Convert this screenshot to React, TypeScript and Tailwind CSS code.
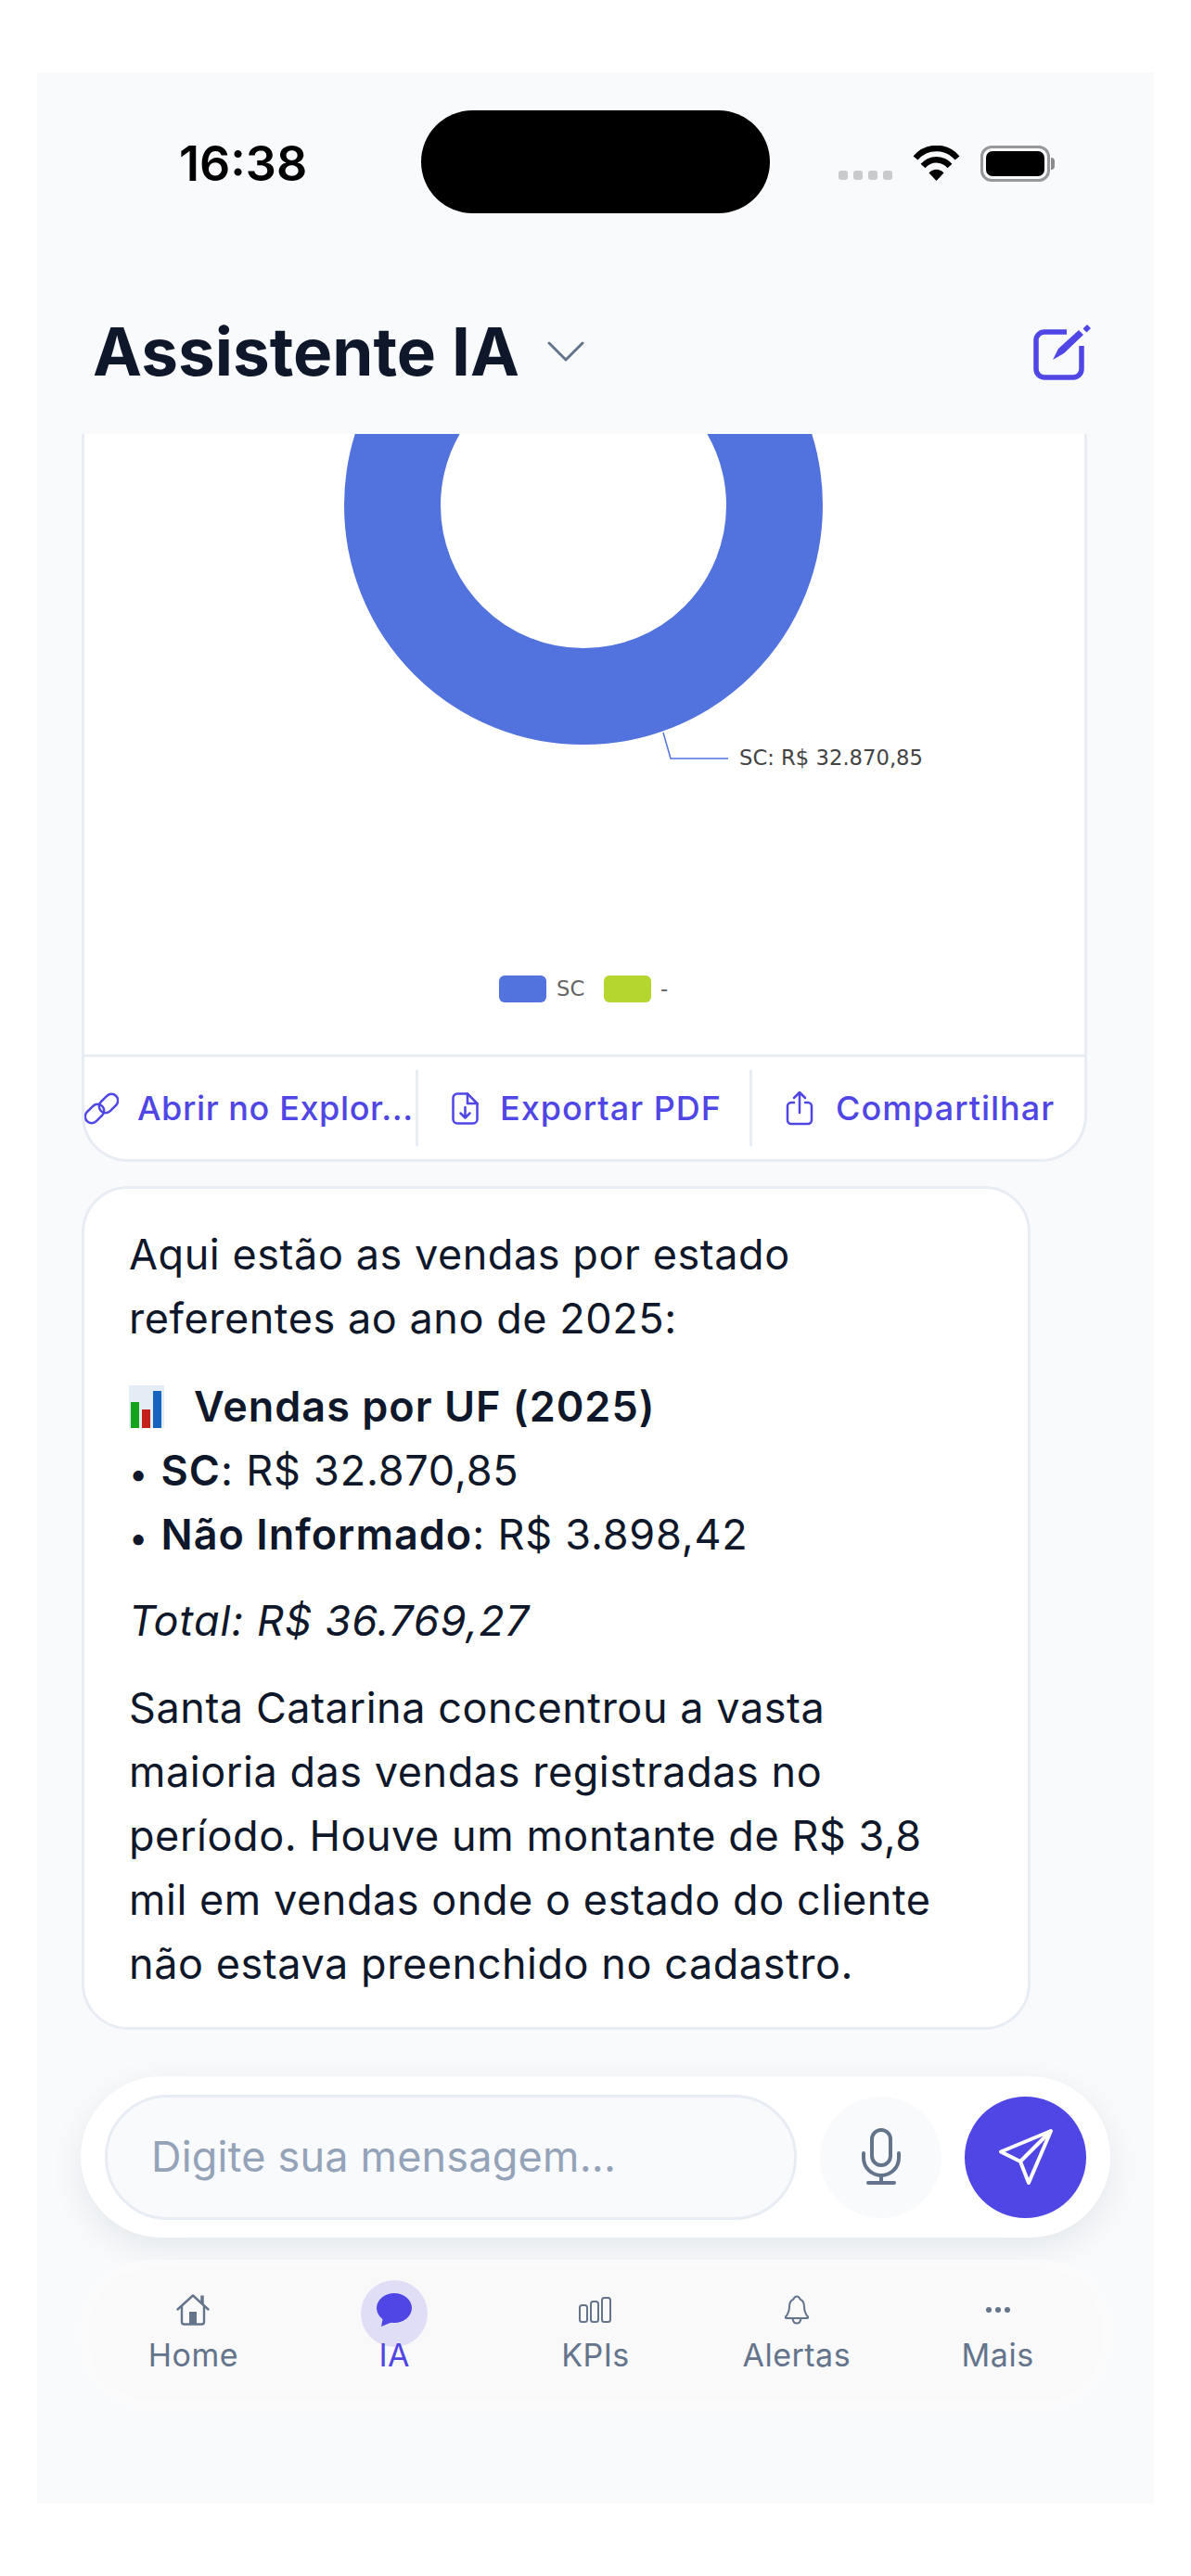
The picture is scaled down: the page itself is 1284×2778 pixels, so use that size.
import React from 'react';

const indigo = '#4f46e5';

const navItems = [
  { label: 'Home', icon: 'home' },
  { label: 'IA', icon: 'chat', active: true },
  { label: 'KPIs', icon: 'kpi' },
  { label: 'Alertas', icon: 'bell' },
  { label: 'Mais', icon: 'more' },
];

const NavIcon = ({ name }: { name: string }) => {
  if (name === 'home') {
    return (
      <svg width="36" height="34" viewBox="0 0 36 34" fill="none" stroke="#64748b" strokeWidth="2.400" strokeLinecap="round" strokeLinejoin="round">
        <path d="M1.500 16.500 18 1.500 34.500 16.500" />
        <path d="M6 13v17a2.500 2.500 0 0 0 2.500 2.500h19a2.500 2.500 0 0 0 2.500-2.500V13" />
        <path d="M28 1.500v9" strokeWidth="3.500" strokeLinecap="butt" />
        <rect x="14" y="19" width="8" height="13" fill="#64748b" stroke="none" />
      </svg>
    );
  }
  if (name === 'chat') {
    return (
      <svg width="40" height="36" viewBox="0 0 40 36" fill={indigo}>
        <ellipse cx="20" cy="16" rx="19" ry="16" />
        <path d="M8 26 L6 36 L18 31 Z" />
      </svg>
    );
  }
  if (name === 'kpi') {
    return (
      <svg width="36" height="28" viewBox="0 0 36 28" fill="none" stroke="#64748b" strokeWidth="2">
        <rect x="1" y="9" width="8" height="18" rx="2.500" />
        <rect x="13" y="5" width="8" height="22" rx="2.500" />
        <rect x="25" y="1" width="9" height="26" rx="2.500" />
      </svg>
    );
  }
  if (name === 'bell') {
    return (
      <svg width="28" height="32" viewBox="0 0 28 32" fill="none" stroke="#64748b" strokeWidth="2" strokeLinejoin="round">
        <path d="M14 1.500c-2 0-3 1.500-3.500 3C7 6 6 9 6 12.500c0 5-1.500 8-4 11-.5 1 0 1.500 1 1.500h22c1 0 1.500-.5 1-1.500-2.500-3-4-6-4-11C22 9 21 6 17.500 4.500 17 3 16 1.500 14 1.500Z" />
        <path d="M9.500 25.500c.5 3 2.300 5 4.500 5s4-2 4.500-5" />
      </svg>
    );
  }
  return (
    <svg width="28" height="8" viewBox="0 0 28 8" fill="#64748b">
      <circle cx="4" cy="4" r="3" />
      <circle cx="14" cy="4" r="3" />
      <circle cx="24" cy="4" r="3" />
    </svg>
  );
};

const ChartEmoji = () => (
  <svg width="38" height="46" viewBox="0 0 38 46" className="shrink-0">
    <rect width="38" height="46" fill="#e4edf5" />
    <rect x="2" y="18" width="9" height="28" fill="#12a51c" />
    <rect x="14" y="26" width="9" height="20" fill="#c4201a" />
    <rect x="26" y="6" width="9" height="40" fill="#1565c0" />
  </svg>
);

export default function App() {
  return (
    <div className="min-h-[2778px] bg-white pt-[78px] px-[40px] font-[Inter,sans-serif]">
      <div className="h-[2622px] bg-[#f8fafc] flex flex-col">
        {/* status bar */}
        <div className="flex pt-[41px]">
          <div className="w-[414px] pl-[153px] pt-[26px] text-[52px] leading-[64px] font-semibold text-black">16:38</div>
          <div className="w-[376px] h-[111px] rounded-[56px] bg-black" />
          <div className="flex pl-[74px] pt-[38px] h-[111px]">
            <div className="flex gap-[6px] pt-[27px]">
              <div className="w-[10px] h-[10px] rounded-[3px] bg-[#c9cacc]" />
              <div className="w-[10px] h-[10px] rounded-[3px] bg-[#c9cacc]" />
              <div className="w-[10px] h-[10px] rounded-[3px] bg-[#c9cacc]" />
              <div className="w-[10px] h-[10px] rounded-[3px] bg-[#c9cacc]" />
            </div>
            <svg className="ml-[22px]" width="51" height="38" viewBox="0 0 51 38" fill="none" stroke="#000" strokeWidth="6.500">
              <path d="M3 13.500C15-.5 36-.5 48 13.500" />
              <path d="M11 22C19 13 32 13 40 22" />
              <path d="M17.500 29.500 25.500 38 33.500 29.500C29 24.500 22 24.500 17.500 29.500Z" fill="#000" stroke="none" />
            </svg>
            <div className="ml-[22px] w-[75px] h-[39px] rounded-[12px] border-[3px] border-[#98989a] p-[3px]">
              <div className="w-full h-full rounded-[7px] bg-black" />
            </div>
            <div className="w-[4px] h-[13px] mt-[13px] ml-[1px] rounded-r-[4px] bg-[#8a8a8c]" />
          </div>
        </div>

        {/* header */}
        <div className="h-[238px] pt-[60px] pl-[60px] pr-[66px] flex items-center justify-between">
          <div className="flex items-center gap-[30px]">
            <h1 className="text-[71px] leading-none font-bold text-[#0f172a]">Assistente IA</h1>
            <svg width="40" height="24" viewBox="0 0 40 24" fill="none" stroke="#64748b" strokeWidth="3" strokeLinecap="round" strokeLinejoin="round">
              <path d="M2 3 20 21 38 3" />
            </svg>
          </div>
          <svg width="64" height="62" viewBox="0 0 64 62" fill="none">
            <path d="M36 10H12a9 9 0 0 0-9 9v31a9 9 0 0 0 9 9h31a9 9 0 0 0 9-9V25" stroke={indigo} strokeWidth="5.500" />
            <path d="M21 40 27 28 49 8 54 13 33 33Z" fill={indigo} />
            <path d="M54.500 6.500 58 3l3 3-3.500 3.500Z" fill={indigo} stroke={indigo} strokeWidth="1.500" strokeLinejoin="round" />
          </svg>
        </div>

        {/* chart card, its top is scrolled away */}
        <div className="ml-[48px] w-[1084px] bg-white border-x-[3px] border-b-[3px] border-[#e8edf4] rounded-b-[50px] overflow-hidden">
          <svg className="block" width="1078" height="669" viewBox="0 0 1078 669">
            <circle cx="538" cy="77" r="206" fill="none" stroke="#5272dd" strokeWidth="104" />
            <path d="M624 322 632 350H694" fill="none" stroke="#5272dd" strokeWidth="1.500" />
            <text x="706" y="357" fontSize="22.700" fill="#444" fontFamily="DejaVu Sans, sans-serif">SC: R$ 32.870,85</text>
            <rect x="447" y="584" width="51" height="29" rx="6" fill="#5272dd" />
            <text x="509" y="606" fontSize="22.700" fill="#666" fontFamily="DejaVu Sans, sans-serif">SC</text>
            <rect x="560" y="584" width="51" height="29" rx="6" fill="#b5d62f" />
            <text x="621" y="606" fontSize="22.700" fill="#666" fontFamily="DejaVu Sans, sans-serif">-</text>
          </svg>
          <div className="grid grid-cols-[357px_360px_361px] h-[113px] border-t-[3px] border-[#e8edf4] py-[14px] text-[36px] font-medium tracking-[1px] text-[#4f46e5]">
            <div className="flex items-center gap-[20px] min-w-0">
              <svg className="shrink-0" width="37" height="37" viewBox="0 0 37 37" fill="none" stroke={indigo} strokeWidth="2.500">
                <rect x="14.500" y="6" width="23" height="14" rx="7" transform="rotate(-45 26 13)" />
                <rect x="-0.500" y="17" width="23" height="14" rx="7" transform="rotate(-45 11 24)" />
              </svg>
              <span className="whitespace-nowrap tracking-[0.6px]">Abrir no Explor...</span>
            </div>
            <div className="flex items-center gap-[23px] pl-[36px] border-l-[3px] border-[#e8edf4]">
              <svg className="shrink-0" width="29" height="35" viewBox="0 0 29 35" fill="none" stroke={indigo} strokeWidth="2.500" strokeLinecap="round" strokeLinejoin="round">
                <path d="M17 1.500H6a4.500 4.500 0 0 0-4.500 4.500v23A4.500 4.500 0 0 0 6 33.500h17a4.500 4.500 0 0 0 4.500-4.500V12Z" />
                <path d="M17 1.500V12h10.500" />
                <path d="M14.500 16v11M9.500 22.500l5 5 5-5" />
              </svg>
              <span className="whitespace-nowrap">Exportar PDF</span>
            </div>
            <div className="flex items-center gap-[24px] pl-[36px] border-l-[3px] border-[#e8edf4]">
              <svg className="shrink-0" width="30" height="38" viewBox="0 0 30 38" fill="none" stroke={indigo} strokeWidth="2.500" strokeLinecap="round" strokeLinejoin="round">
                <path d="M9 13H6a4 4 0 0 0-4 4v15a4 4 0 0 0 4 4h18a4 4 0 0 0 4-4V17a4 4 0 0 0-4-4h-3" />
                <path d="M15 24V2M9 8l6-6 6 6" />
              </svg>
              <span className="whitespace-nowrap">Compartilhar</span>
            </div>
          </div>
        </div>

        {/* reply bubble */}
        <div className="ml-[48px] mt-[26px] w-[1023px] h-[910px] bg-white border-[3px] border-[#e8edf4] rounded-[50px] pl-[48px] pr-[70px] pt-[36px] text-[45px] font-[370] leading-[69px] tracking-[0.55px] text-[#0f172a]">
          <p>Aqui estão as vendas por estado referentes ao ano de 2025:</p>
          <div className="mt-[26px]">
            <p className="flex items-center gap-[32px] font-semibold tracking-[1px]"><ChartEmoji /><span>Vendas por UF (2025)</span></p>
            <p className="tracking-[0.8px]"><span className="text-[36px] leading-none">•</span> <strong className="font-semibold tracking-[1px]">SC</strong>: R$ 32.870,85</p>
            <p className="tracking-[0.8px]"><span className="text-[36px] leading-none">•</span> <strong className="font-semibold tracking-[1px]">Não Informado</strong>: R$ 3.898,42</p>
          </div>
          <p className="mt-[24px] italic tracking-[1px]">Total: R$ 36.769,27</p>
          <p className="mt-[25px]">Santa Catarina concentrou a vasta maioria das vendas registradas no período. Houve um montante de R$ 3,8 mil em vendas onde o estado do cliente não estava preenchido no cadastro.</p>
        </div>

        {/* composer */}
        <div className="ml-[47px] mt-[50px] w-[1110px] h-[174px] rounded-[87px] bg-white shadow-[0_12px_36px_rgba(15,23,42,0.08)] flex items-center px-[26px] gap-[25px]">
          <div className="w-[746px] h-[135px] rounded-[68px] border-[3px] border-[#e8edf4] bg-[#f8fafc] pl-[47px] flex items-center text-[45px] font-[370] tracking-[0.2px] text-[#94a3b8]">Digite sua mensagem...</div>
          <div className="w-[131px] h-[131px] rounded-full bg-[#f8fafc] flex items-center justify-center">
            <svg width="44" height="62" viewBox="0 0 44 62" fill="none" stroke="#64748b" strokeWidth="4" strokeLinecap="round">
              <rect x="12" y="2" width="20" height="38" rx="10" />
              <path d="M3 27v5a19 19 0 0 0 38 0v-5" />
              <path d="M22 51v8M8 59h28" />
            </svg>
          </div>
          <div className="w-[131px] h-[131px] rounded-full bg-[#4f46e5] flex items-center justify-center">
            <svg width="60" height="60" viewBox="0 0 60 60" fill="none" stroke="#fff" strokeWidth="4" strokeLinejoin="round">
              <path d="M57 2 3 24.500 24 35l9 23Z" />
              <path d="M57 2 24 35" />
            </svg>
          </div>
        </div>

        {/* tab bar */}
        <div className="ml-[47px] mt-[24px] w-[1110px] h-[161px] rounded-[75px] bg-[#f9f9fa] shadow-[inset_0_0_18px_#fcfdfd] grid grid-cols-5 px-[13px] pt-[22px]">
          {navItems.map((item) => (
            <div key={item.label} className="relative flex flex-col items-center">
              {item.active && <div className="absolute top-0 w-[72px] h-[72px] rounded-full bg-[#e0ddf7]" />}
              <div className="relative h-[64px] flex items-center justify-center"><NavIcon name={item.icon} /></div>
              <span className={`relative text-[34px] leading-[40px] tracking-[0.5px] -mt-[3px] ${item.active ? 'text-[#4f46e5]' : 'text-[#64748b]'}`}>{item.label}</span>
            </div>
          ))}
        </div>
      </div>
    </div>
  );
}
